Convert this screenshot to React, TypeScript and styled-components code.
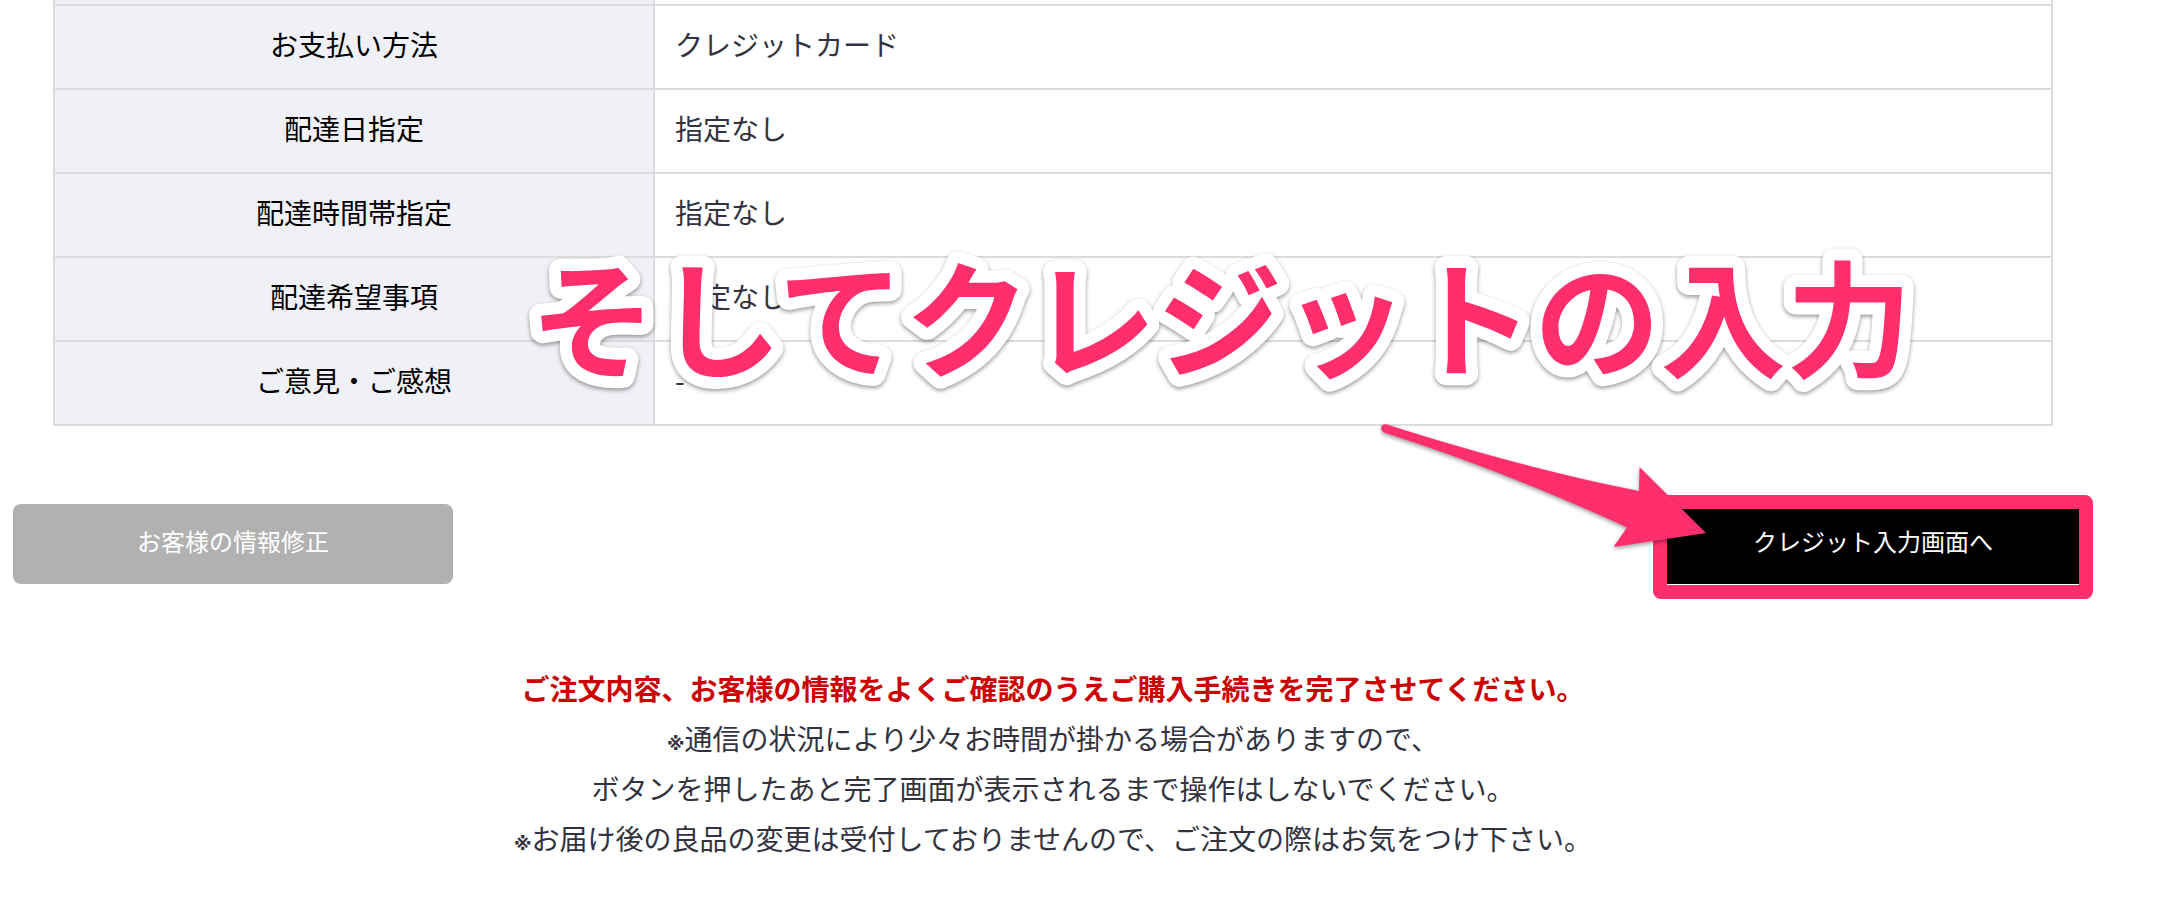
import React from "react";
import styled, { createGlobalStyle } from "styled-components";

const GlobalStyle = createGlobalStyle`
  *, *::before, *::after { box-sizing: border-box; }
  body {
    margin: 0;
    background: #fff;
    color: #333340;
    font-family: "Noto Sans CJK JP", sans-serif;
    font-size: 28px;
    line-height: 50px;
  }
`;

const Page = styled.main`
  position: relative;
  padding: 0 67px 0 13px;
  overflow: hidden;
`;

const Details = styled.section`
  padding: 0 40px;
`;

const Table = styled.table`
  width: 100%;
  border-collapse: collapse;
  table-layout: fixed;
`;

const LabelColumn = styled.col`
  width: 600px;
`;

const Label = styled.th`
  height: 84px;
  padding: 0 20px 6px;
  border: 2px solid #dcdcdc;
  background: #f0f1f6;
  color: #000;
  font-weight: 400;
  text-align: center;
`;

const Value = styled.td`
  padding: 0 20px 6px;
  border: 2px solid #dcdcdc;
`;

const CutRow = styled.tr`
  & > td {
    height: 5px;
    border: 2px solid #dcdcdc;
    border-top: 0;
    padding: 0;
  }
  & > td:first-child {
    background: #f0f1f6;
  }
`;

const Actions = styled.div`
  display: flex;
  justify-content: space-between;
  margin-top: 78px;
`;

const ButtonFrame = styled.div`
  position: relative;
  width: 440px;
`;

const Button = styled.button<{ $primary?: boolean }>`
  display: block;
  width: 100%;
  height: 80px;
  padding: 0 0 6px;
  border: 0;
  border-radius: 8px;
  background: ${(p) => (p.$primary ? "#000" : "#b1b1b1")};
  color: #fff;
  font: inherit;
  font-size: 24px;
  cursor: pointer;
`;

const Highlight = styled.span`
  position: absolute;
  inset: -9px 0 -15px;
  border: 14px solid #ff2f6d;
  border-radius: 8px;
  pointer-events: none;
`;

const Notes = styled.p`
  margin: 79px 0 40px;
  text-align: center;
`;

const Warning = styled.strong`
  color: #cc0000;
  font-weight: 700;
`;

const Mark = styled.span`
  font-family: "DejaVu Sans", "Noto Sans CJK JP", sans-serif;
  font-size: 18px;
  font-weight: 700;
  line-height: 20px;
`;

const Caption = styled.svg`
  position: absolute;
  top: 240px;
  left: 520px;
  width: 1400px;
  height: 180px;
  overflow: visible;
  pointer-events: none;
  filter: drop-shadow(0 2px 2px rgba(0, 0, 0, 0.4));
`;

const CaptionText = styled.text`
  fill: #ff2f6d;
  stroke: #fff;
  stroke-width: 24px;
  stroke-linejoin: round;
  paint-order: stroke;
  font-size: 126px;
  font-weight: 700;
`;

const Arrow = styled.svg`
  position: absolute;
  top: 410px;
  left: 1370px;
  width: 350px;
  height: 150px;
  fill: #ff2f6d;
  pointer-events: none;
  filter: drop-shadow(0 2px 2px rgba(0, 0, 0, 0.4));
`;

const rows = [
  ["お支払い方法", "クレジットカード"],
  ["配達日指定", "指定なし"],
  ["配達時間帯指定", "指定なし"],
  ["配達希望事項", "指定なし"],
  ["ご意見・ご感想", "-"],
];

export default function App() {
  return (
    <Page>
      <GlobalStyle />
      <Details>
        <Table>
          <colgroup>
            <LabelColumn />
            <col />
          </colgroup>
          <tbody>
            <CutRow>
              <td />
              <td />
            </CutRow>
            {rows.map(([label, value]) => (
              <tr key={label}>
                <Label scope="row">{label}</Label>
                <Value>{value}</Value>
              </tr>
            ))}
          </tbody>
        </Table>
      </Details>
      <Actions>
        <ButtonFrame>
          <Button type="button">お客様の情報修正</Button>
        </ButtonFrame>
        <ButtonFrame>
          <Button type="button" $primary>クレジット入力画面へ</Button>
          <Highlight />
        </ButtonFrame>
      </Actions>
      <Notes>
        <Warning>ご注文内容、お客様の情報をよくご確認のうえご購入手続きを完了させてください。</Warning>
        <br />
        <Mark>※</Mark>通信の状況により少々お時間が掛かる場合がありますので、
        <br />
        ボタンを押したあと完了画面が表示されるまで操作はしないでください。
        <br />
        <Mark>※</Mark>お届け後の良品の変更は受付しておりませんので、ご注文の際はお気をつけ下さい。
      </Notes>
      <Caption viewBox="0 0 1400 180">
        <CaptionText x="10" y="128">そしてクレジットの入力</CaptionText>
      </Caption>
      <Arrow viewBox="0 0 350 150" aria-hidden="true">
        <path d="M17 14.500C90 38 190 66 269 81L269.500 57L336 123L243.500 137L257 117.500C190 86 100 50 14 22.500C9 20 11 13 17 14.500Z" />
      </Arrow>
    </Page>
  );
}
